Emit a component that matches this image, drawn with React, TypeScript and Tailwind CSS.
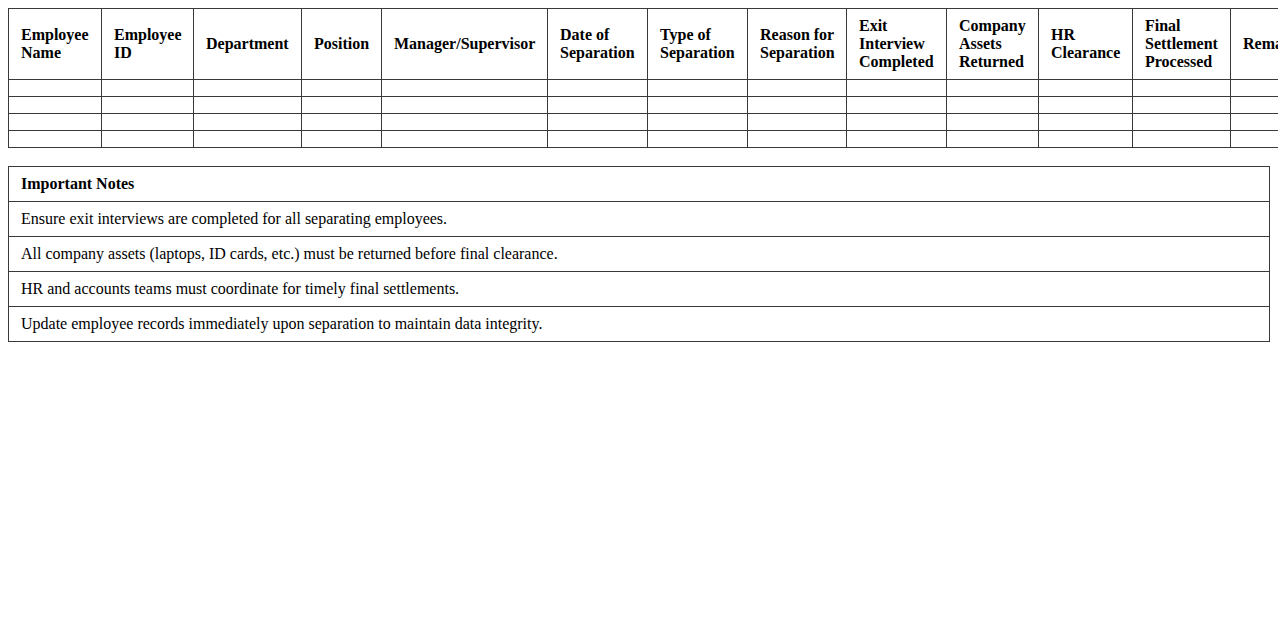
import React from "react";

const cols: { label: string[]; w: number }[] = [
  { label: ["Employee", "Name"], w: 93 },
  { label: ["Employee", "ID"], w: 92 },
  { label: ["Department"], w: 108 },
  { label: ["Position"], w: 80 },
  { label: ["Manager/Supervisor"], w: 166 },
  { label: ["Date of", "Separation"], w: 100 },
  { label: ["Type of", "Separation"], w: 100 },
  { label: ["Reason for", "Separation"], w: 99 },
  { label: ["Exit", "Interview", "Completed"], w: 100 },
  { label: ["Company", "Assets", "Returned"], w: 92 },
  { label: ["HR", "Clearance"], w: 94 },
  { label: ["Final", "Settlement", "Processed"], w: 98 },
  { label: ["Remarks"], w: 100 },
];

const notes = [
  "Ensure exit interviews are completed for all separating employees.",
  "All company assets (laptops, ID cards, etc.) must be returned before final clearance.",
  "HR and accounts teams must coordinate for timely final settlements.",
  "Update employee records immediately upon separation to maintain data integrity.",
];

export default function App() {
  const total = cols.reduce((a, c) => a + c.w, 0) + 1;
  return (
    <div
      className="p-2 bg-white text-black"
      style={{ fontFamily: '"Liberation Serif", "Times New Roman", serif' }}
    >
      <table
        className="border-collapse table-fixed"
        style={{ width: total }}
      >
        <colgroup>
          {cols.map((c, i) => (
            <col key={i} style={{ width: c.w }} />
          ))}
        </colgroup>
        <thead>
          <tr>
            {cols.map((c, i) => (
              <th
                key={i}
                className="border border-[#3a3a3a] px-3 py-2 text-left align-middle font-bold text-[16px] leading-[18px] whitespace-nowrap overflow-hidden"
              >
                {c.label.map((l, j) => (
                  <div key={j}>{l}</div>
                ))}
              </th>
            ))}
          </tr>
        </thead>
        <tbody>
          {[0, 1, 2, 3].map((r) => (
            <tr key={r}>
              {cols.map((_, i) => (
                <td key={i} className="border border-[#3a3a3a] px-3 py-2 h-[17px]"></td>
              ))}
            </tr>
          ))}
        </tbody>
      </table>

      <table className="w-[1262px] border-collapse mt-[18px]">
        <tbody>
          <tr>
            <td className="border border-[#3a3a3a] px-3 py-2 font-bold text-[16px] leading-[18px]">
              Important Notes
            </td>
          </tr>
          {notes.map((n, i) => (
            <tr key={i}>
              <td className="border border-[#3a3a3a] px-3 py-2 text-[16px] leading-[18px]">
                {n}
              </td>
            </tr>
          ))}
        </tbody>
      </table>
    </div>
  );
}
